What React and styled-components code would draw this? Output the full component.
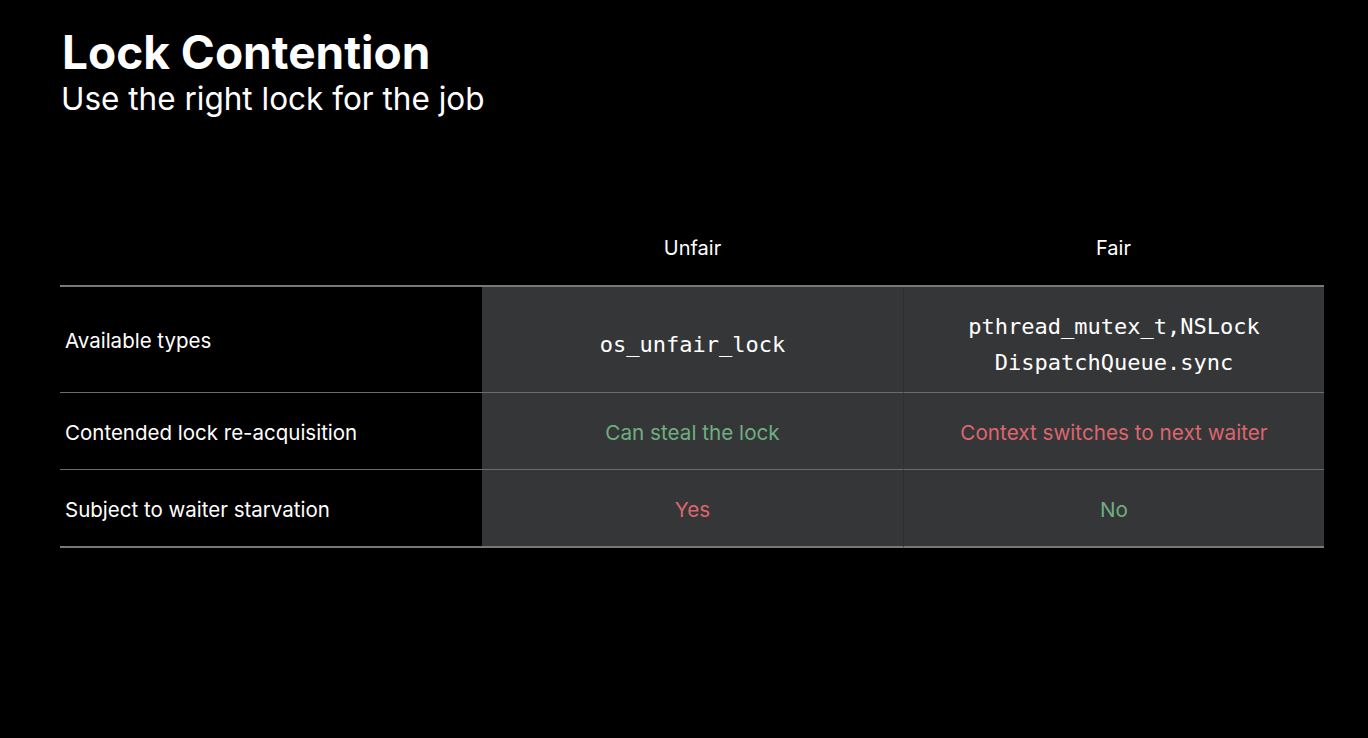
import styled, { createGlobalStyle } from "styled-components";

const GlobalStyle = createGlobalStyle`
  html, body {
    margin: 0;
    padding: 0;
    background: #000;
  }
  body {
    font-family: Inter, "Noto Sans", sans-serif;
    color: #fff;
  }
`;

const Slide = styled.div`
  width: 1368px;
  height: 738px;
  background: #000;
  padding: 24px 44px 0 60px;
  box-sizing: border-box;
`;

const Title = styled.h1`
  margin: 0 0 0 2px;
  font-size: 46px;
  font-weight: 700;
  letter-spacing: 0;
  line-height: 56px;
`;

const Subtitle = styled.h2`
  margin: -1px 0 0 1px;
  font-size: 31.5px;
  font-weight: 400;
  letter-spacing: 0;
  line-height: 40px;
`;

const Table = styled.div`
  margin-top: 92px;
  display: grid;
  grid-template-columns: 422px 421px 421px;
`;

const HeadCell = styled.div`
  box-sizing: border-box;
  height: 76px;
  display: flex;
  align-items: center;
  justify-content: center;
  font-size: 20px;
  padding-top: 0;
  border-bottom: 2px solid #76787c;
`;

const Label = styled.div`
  box-sizing: border-box;
  height: ${(p) => p.$h}px;
  display: flex;
  align-items: center;
  padding-left: 5px;
  padding-top: 2px;
  font-size: 20.5px;
  border-bottom: ${(p) => (p.$last ? "2px solid #76787c" : "1px solid #6a6c70")};
`;

const Cell = styled.div`
  box-sizing: border-box;
  height: ${(p) => p.$h}px;
  display: flex;
  flex-direction: column;
  align-items: center;
  justify-content: center;
  gap: 12px;
  padding-top: ${(p) => (p.$mono ? 10 : 2)}px;
  background: #353638;
  border-bottom: ${(p) => (p.$last ? "2px solid #76787c" : "1px solid #6a6c70")};
  border-left: ${(p) => (p.$divided ? "1px solid #2f3032" : "none")};
  font-size: 20.7px;
  color: ${(p) => p.$color || "#fff"};
`;

const Mono = styled.span`
  font-family: "DejaVu Sans Mono", "Liberation Mono", monospace;
  font-size: 22px;
  line-height: 24px;
`;

const GREEN = "#6fae80";
const RED = "#dc666e";

export default function App() {
  return (
    <>
      <GlobalStyle />
      <Slide>
        <Title>Lock Contention</Title>
        <Subtitle>Use the right lock for the job</Subtitle>
        <Table>
          <HeadCell />
          <HeadCell>Unfair</HeadCell>
          <HeadCell>Fair</HeadCell>

          <Label $h={106}>Available types</Label>
          <Cell $h={106} $mono>
            <Mono>os_unfair_lock</Mono>
          </Cell>
          <Cell $h={106} $mono $divided>
            <Mono>pthread_mutex_t,NSLock</Mono>
            <Mono>DispatchQueue.sync</Mono>
          </Cell>

          <Label $h={77}>Contended lock re-acquisition</Label>
          <Cell $h={77} $color={GREEN}>Can steal the lock</Cell>
          <Cell $h={77} $color={RED} $divided>
            Context switches to next waiter
          </Cell>

          <Label $h={78} $last>Subject to waiter starvation</Label>
          <Cell $h={78} $color={RED} $last>Yes</Cell>
          <Cell $h={78} $color={GREEN} $divided $last>No</Cell>
        </Table>
      </Slide>
    </>
  );
}
